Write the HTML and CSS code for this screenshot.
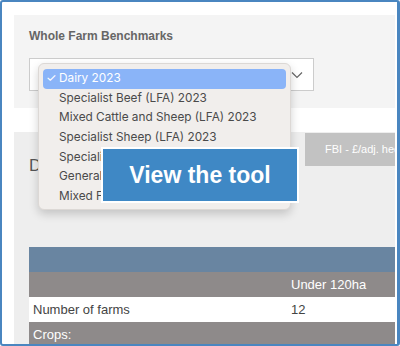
FILE: index.html
```html
<!DOCTYPE html>
<html lang="en">
<head>
    <meta charset="UTF-8">
    <title>Whole Farm Benchmarks</title>
    <link rel="stylesheet" href="styles.css">
</head>
<body>
    <div class="frame">
        <div class="panel">
            <div class="title">Whole Farm Benchmarks</div>
            <div class="select">
                <svg class="chevron" width="12" height="8" viewBox="0 0 12 8"><path d="M1 1.5 L6 6.5 L11 1.5" fill="none" stroke="#666" stroke-width="1.2"/></svg>
            </div>
        </div>

        <div class="results">
            <div class="tabs">
                <div class="tab">FBI - £/adj. hectare</div>
            </div>
            <h2 class="heading">Dairy 2023</h2>
            <table class="bench">
                <tr class="row-head"><td></td><td></td></tr>
                <tr class="row-sub"><td></td><td>Under 120ha</td></tr>
                <tr class="row-data"><td>Number of farms</td><td>12</td></tr>
                <tr class="row-sub"><td>Crops:</td><td></td></tr>
            </table>
        </div>

        <ul class="menu">
            <li class="selected"><span class="tick">✓</span>Dairy 2023</li>
            <li>Specialist Beef (LFA) 2023</li>
            <li>Mixed Cattle and Sheep (LFA) 2023</li>
            <li>Specialist Sheep (LFA) 2023</li>
            <li>Specialist Sheep (Lowland) 2023</li>
            <li>General Cropping 2023</li>
            <li>Mixed Farming 2023</li>
        </ul>

        <div class="cta">View the tool</div>
    </div>
</body>
</html>
```

FILE: styles.css
```css
body {
    margin: 0;
    font-family: "Liberation Sans", Arial, sans-serif;
}
.frame {
    position: relative;
    width: 400px;
    height: 346px;
    box-sizing: border-box;
    border: 2px solid #4a86c0;
    border-right-width: 3px;
    border-radius: 3px;
    background: #fff;
    overflow: hidden;
    padding: 13px 2px 0 12px;
}
.panel {
    height: 93px;
    box-sizing: border-box;
    background: #f4f4f4;
    padding: 13px 0 0 15px;
}
.title {
    font-size: 12px;
    font-weight: bold;
    color: #666;
    line-height: 16px;
}
.select {
    margin-top: 14px;
    width: 285px;
    height: 33px;
    box-sizing: border-box;
    background: #fff;
    border: 1px solid #ccc;
    display: flex;
    align-items: center;
    justify-content: flex-end;
    padding-right: 10px;
}
.results {
    margin-top: 24px;
    height: 230px;
    background: #eeeeee;
    padding: 0 0 0 15px;
}
.tabs {
    display: flex;
    justify-content: flex-end;
    padding-top: 1px;
}
.tab {
    width: 90px;
    height: 33px;
    background: #c2c2c2;
    color: #fff;
    font-size: 11px;
    line-height: 33px;
    padding-left: 20px;
    box-sizing: border-box;
    white-space: nowrap;
    overflow: hidden;
}
.heading {
    margin: -10px 0 0;
    font-size: 17px;
    font-weight: normal;
    color: #555;
    line-height: 20px;
}
.bench {
    margin-top: 71px;
    width: 100%;
    border-collapse: collapse;
    font-size: 13px;
}
.bench td {
    height: 25px;
    padding: 0 4px;
}
.bench td:first-child {
    width: 250px;
}
.row-head td {
    background: #6985a1;
}
.row-sub td {
    background: #8e8a8a;
    color: #fff;
}
.row-data td {
    background: #fff;
    color: #444;
}
.menu {
    position: absolute;
    left: 36px;
    top: 61px;
    width: 253px;
    margin: 0;
    padding: 5px 4px 2px;
    box-sizing: border-box;
    list-style: none;
    background: #f1eeec;
    border: 1px solid #dcd8d5;
    border-radius: 6px;
    box-shadow: 0 4px 10px rgba(0, 0, 0, 0.18);
    font-family: Inter, "Noto Sans", sans-serif;
    font-size: 11.8px;
    color: #4a4a4a;
}
.menu li {
    height: 19.7px;
    line-height: 19.7px;
    padding-left: 16px;
    border-radius: 4px;
    white-space: nowrap;
    overflow: hidden;
}
.menu li.selected {
    background: #8ab4f8;
    color: #fff;
    padding-left: 3px;
}
.tick {
    display: inline-block;
    width: 13px;
}
.cta {
    position: absolute;
    left: 99px;
    top: 145px;
    width: 198px;
    height: 56px;
    box-sizing: border-box;
    background: #3f88c5;
    border: 2px solid #fff;
    color: #fff;
    font-family: "Liberation Sans", Arial, sans-serif;
    font-weight: bold;
    font-size: 23px;
    display: flex;
    align-items: center;
    justify-content: center;
}
```
